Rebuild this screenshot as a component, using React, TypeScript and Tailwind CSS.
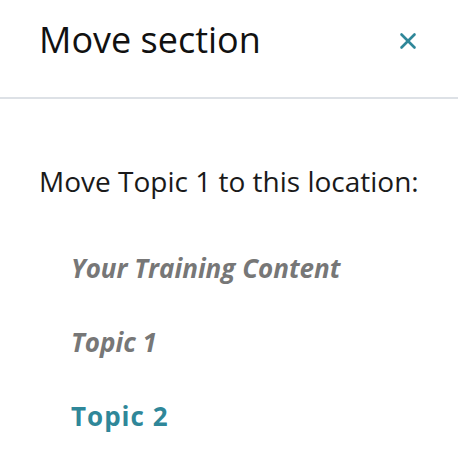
import { X } from 'lucide-react';

const items = [
  { label: 'Your Training Content', current: false },
  { label: 'Topic 1', current: false },
  { label: 'Topic 2', current: true },
];

const MoveSection = () => {
  return (
    <div className="w-[458px] h-[462px] bg-white font-['Open_Sans',sans-serif]">
      <header className="flex items-start justify-between h-[99px] pl-[39px] pr-[37px] pt-4 border-b-2 border-[#dde1e6]">
        <h1 className="text-[36px] leading-[48px] text-[#111]">Move section</h1>
        <button className="mt-[12px] text-[#2f8799]">
          <X size={26} strokeWidth={2.4} />
        </button>
      </header>
      <div className="pl-[39px]">
        <p className="mt-16 text-[28px] leading-[36px] text-[#1a1a1a]">
          Move Topic 1 to this location:
        </p>
        <ul className="mt-[53px] ml-8 flex flex-col gap-[42px]">
          {items.map((item) => (
            <li
              key={item.label}
              className={
                item.current
                  ? 'text-[26px] leading-[32px] font-bold tracking-[1px] text-[#2f8799]'
                  : 'text-[26px] leading-[32px] font-bold italic text-[#777]'
              }
            >
              {item.label}
            </li>
          ))}
        </ul>
      </div>
    </div>
  );
};

export default function App() {
  return <MoveSection />;
}
